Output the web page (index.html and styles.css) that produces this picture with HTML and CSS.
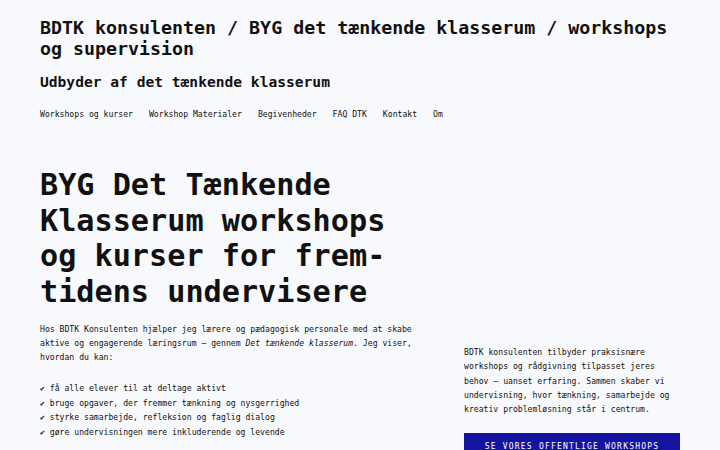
FILE: index.html
```html
<!DOCTYPE html>
<html lang="da">
<head>
<meta charset="utf-8">
<title>BDTK konsulenten</title>
<link rel="stylesheet" href="styles.css">
</head>
<body>
<div class="page">
  <header class="site-header">
    <h1 class="site-title">BDTK konsulenten / BYG det tænkende klasserum / workshops og supervision</h1>
    <p class="site-tagline">Udbyder af det tænkende klasserum</p>
    <nav class="site-nav">
      <a href="#">Workshops og kurser</a>
      <a href="#">Workshop Materialer</a>
      <a href="#">Begivenheder</a>
      <a href="#">FAQ DTK</a>
      <a href="#">Kontakt</a>
      <a href="#">Om</a>
    </nav>
  </header>
  <main class="hero">
    <div class="hero-main">
      <h2 class="hero-title">BYG Det Tænkende Klasserum workshops og kurser for frem&shy;tidens undervisere</h2>
      <p class="hero-text">Hos BDTK Konsulenten hjælper jeg lærere og pædagogisk personale med at skabe aktive og engagerende læringsrum – gennem <em>Det tænkende klasserum</em>. Jeg viser, hvordan du kan:</p>
      <ul class="checks">
        <li>✔ få alle elever til at deltage aktivt</li>
        <li>✔ bruge opgaver, der fremmer tænkning og nysgerrighed</li>
        <li>✔ styrke samarbejde, refleksion og faglig dialog</li>
        <li>✔ gøre undervisningen mere inkluderende og levende</li>
      </ul>
    </div>
    <aside class="hero-side">
      <p class="side-text">BDTK konsulenten tilbyder praksisnære workshops og rådgivning tilpasset jeres behov – uanset erfaring. Sammen skaber vi undervisning, hvor tænkning, samarbejde og kreativ problemløsning står i centrum.</p>
      <a class="btn" href="#">SE VORES OFFENTLIGE WORKSHOPS</a>
    </aside>
  </main>
</div>
</body>
</html>
```
FILE: styles.css
```css
html, body {
  margin: 0;
  padding: 0;
}
body {
  background: #f8f9fc;
  color: #111111;
  font-family: "DejaVu Sans Mono", "Liberation Mono", monospace;
}
.page {
  width: 640px;
  padding: 0 40px;
}
.site-header {
  padding-top: 17px;
}
.site-title {
  margin: 0;
  font-size: 18.3px;
  line-height: 21px;
  font-weight: bold;
}
.site-tagline {
  margin: 14px 0 0;
  font-size: 14.6px;
  line-height: 18px;
  font-weight: bold;
}
.site-nav {
  display: flex;
  gap: 16px;
  margin-top: 17px;
  font-size: 8.15px;
  line-height: 12px;
}
.site-nav a {
  color: #111111;
  text-decoration: none;
}
.hero {
  display: grid;
  grid-template-columns: 384px 216px;
  column-gap: 40px;
  margin-top: 47px;
}
.hero-title {
  margin: 0;
  font-size: 30.2px;
  line-height: 35.5px;
  font-weight: bold;
  hyphens: manual;
}
.hero-text {
  margin: 13px 0 0;
  font-size: 8.15px;
  line-height: 14px;
}
.hero-text em {
  font-style: italic;
  line-height: 1;
}
.checks {
  list-style: none;
  margin: 17px 0 0;
  padding: 0;
  font-size: 8.15px;
  line-height: 14.5px;
}
.hero-side {
  padding-top: 178px;
}
.side-text {
  margin: 0;
  font-size: 8.15px;
  line-height: 14.3px;
}
.btn {
  display: block;
  margin-top: 17px;
  background: #1414a0;
  color: #ffffff;
  text-decoration: none;
  text-align: center;
  font-size: 8px;
  letter-spacing: 1.2px;
  line-height: 12px;
  padding: 8px 0 16px;
}
```
